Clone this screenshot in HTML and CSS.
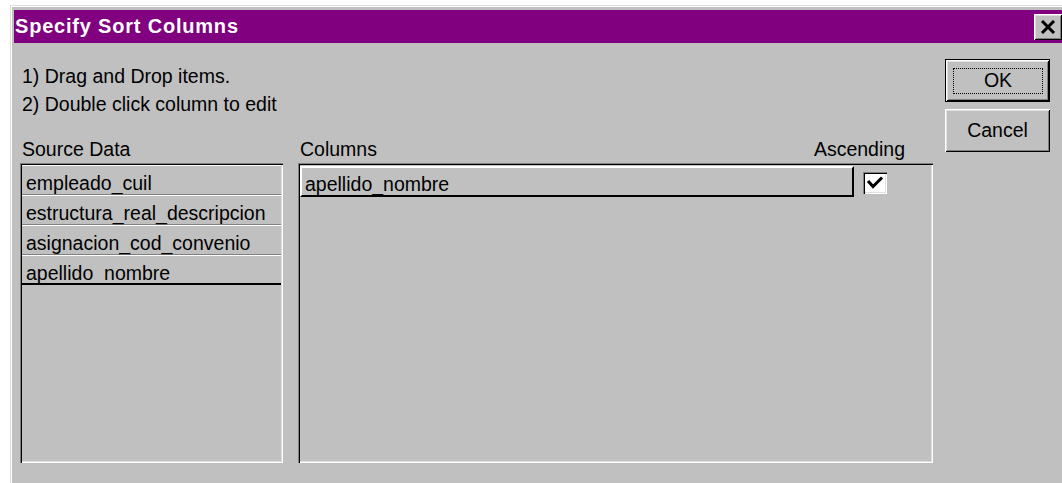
FILE: index.html
```html
<!DOCTYPE html>
<html lang="en">
<head>
<meta charset="utf-8">
<title>Specify Sort Columns</title>
<link rel="stylesheet" href="styles.css">
</head>
<body>
<div class="window">
  <div class="titlebar">
    <span class="title">Specify Sort Columns</span>
    <button class="close" type="button" aria-label="Close">
      <svg width="16" height="14" viewBox="0 0 16 14"><path d="M2 1 L14 13 M14 1 L2 13" stroke="#000" stroke-width="3" fill="none"/></svg>
    </button>
  </div>
  <div class="content">
    <div class="main">
      <div class="hints">
        <div>1) Drag and Drop items.</div>
        <div>2) Double click column to edit</div>
      </div>
      <div class="panels">
        <div class="panel source">
          <div class="label">Source Data</div>
          <div class="listbox">
            <div class="item">empleado_cuil</div>
            <div class="item">estructura_real_descripcion</div>
            <div class="item">asignacion_cod_convenio</div>
            <div class="item last">apellido_nombre</div>
          </div>
        </div>
        <div class="panel columns">
          <div class="label header">
            <span>Columns</span>
            <span>Ascending</span>
          </div>
          <div class="listbox">
            <div class="colrow">
              <div class="colname">apellido_nombre</div>
              <div class="check">
                <svg width="24" height="22" viewBox="0 0 24 22"><path d="M6 10 L10 14.5 L18 6.5" stroke="#000" stroke-width="3" fill="none" stroke-linecap="square"/></svg>
              </div>
            </div>
          </div>
        </div>
      </div>
    </div>
    <div class="buttons">
      <button class="btn default" type="button"><span class="focus">OK</span></button>
      <button class="btn" type="button">Cancel</button>
    </div>
  </div>
</div>
</body>
</html>
```

FILE: styles.css
```css
html, body {
  margin: 0;
  padding: 0;
  background: #ffffff;
  overflow: hidden;
  width: 1062px;
  height: 483px;
}

body {
  font-family: "Liberation Sans", Arial, sans-serif;
  font-size: 19.5px;
  color: #000;
}

/* dialog frame, cut off by the right and bottom edges of the page */
.window {
  margin: 5px 0 0 10px;
  width: 1052px;
  height: 478px;
  box-sizing: border-box;
  border-top: 1px solid #dfdfdf;
  border-left: 1px solid #dfdfdf;
  box-shadow: inset 1px 1px #ffffff;
  padding: 4px 0 0 3px;
  background: #c0c0c0;
}

.titlebar {
  height: 33px;
  background: #800080;
  display: flex;
  align-items: center;
  justify-content: space-between;
  padding-left: 1px;
}

.title {
  color: #fff;
  font-weight: bold;
  font-size: 20px;
  letter-spacing: 0.8px;
  line-height: 33px;
}

.close {
  width: 28px;
  height: 26px;
  margin-right: 0;
  padding: 0;
  border: none;
  background: #c0c0c0;
  box-shadow: inset 1px 1px #ffffff, inset -1px -1px #000000, inset 2px 2px #dfdfdf, inset -2px -2px #808080;
  display: flex;
  align-items: center;
  justify-content: center;
}

.close svg {
  display: block;
}

.content {
  display: flex;
  padding: 16px 0 0 6px;
}

.main {
  width: 913px;
}

.hints {
  padding: 3px 0 0 2px;
  line-height: 28px;
}

.panels {
  display: flex;
  gap: 15px;
  margin-top: 20px;
}

.label {
  height: 22px;
  line-height: 22px;
  padding-left: 2px;
  margin-bottom: 3px;
}

.header {
  display: flex;
  justify-content: space-between;
  padding-right: 28px;
}

.source {
  width: 263px;
}

.columns {
  width: 635px;
}

/* sunken list field */
.listbox {
  height: 300px;
  box-sizing: border-box;
  padding: 2px;
  background: #c0c0c0;
  box-shadow: inset 1px 1px #808080, inset 2px 2px #000000, inset -1px -1px #ffffff, inset -2px -2px #dfdfdf;
}

.item {
  height: 30px;
  box-sizing: border-box;
  border-top: 1px solid #ffffff;
  border-bottom: 1px solid #808080;
  padding: 6px 0 0 4px;
  line-height: 22px;
  white-space: nowrap;
}

.item.last {
  border-bottom: 2px solid #000000;
}

.colrow {
  display: flex;
  margin-top: 1px;
}

.colname {
  width: 554px;
  height: 31px;
  box-sizing: border-box;
  border-top: 2px solid #ffffff;
  border-left: 2px solid #ffffff;
  border-bottom: 2px solid #000000;
  border-right: 2px solid #000000;
  padding: 5px 0 0 3px;
  line-height: 22px;
}

.check {
  width: 24px;
  height: 22px;
  margin: 6px 0 0 9px;
  background: #ffffff;
  box-shadow: inset 1px 1px #808080, inset 2px 2px #000000, inset -1px -1px #ffffff, inset -2px -2px #dfdfdf;
}

.check svg {
  display: block;
}

.buttons {
  display: flex;
  flex-direction: column;
  gap: 7px;
  margin-left: 12px;
}

.btn {
  width: 105px;
  height: 43px;
  padding: 0;
  border: none;
  background: #c0c0c0;
  font-family: "Liberation Sans", Arial, sans-serif;
  font-size: 19.5px;
  color: #000;
  box-shadow: inset 1px 1px #ffffff, inset -1px -1px #000000, inset 2px 2px #dfdfdf, inset -2px -2px #808080;
  display: flex;
  align-items: center;
  justify-content: center;
}

.btn.default {
  border: 1px solid #000000;
}

.focus {
  width: 90px;
  height: 26px;
  box-sizing: border-box;
  border: 1px dotted #000000;
  display: flex;
  align-items: center;
  justify-content: center;
  margin-left: 1px;
}
```
